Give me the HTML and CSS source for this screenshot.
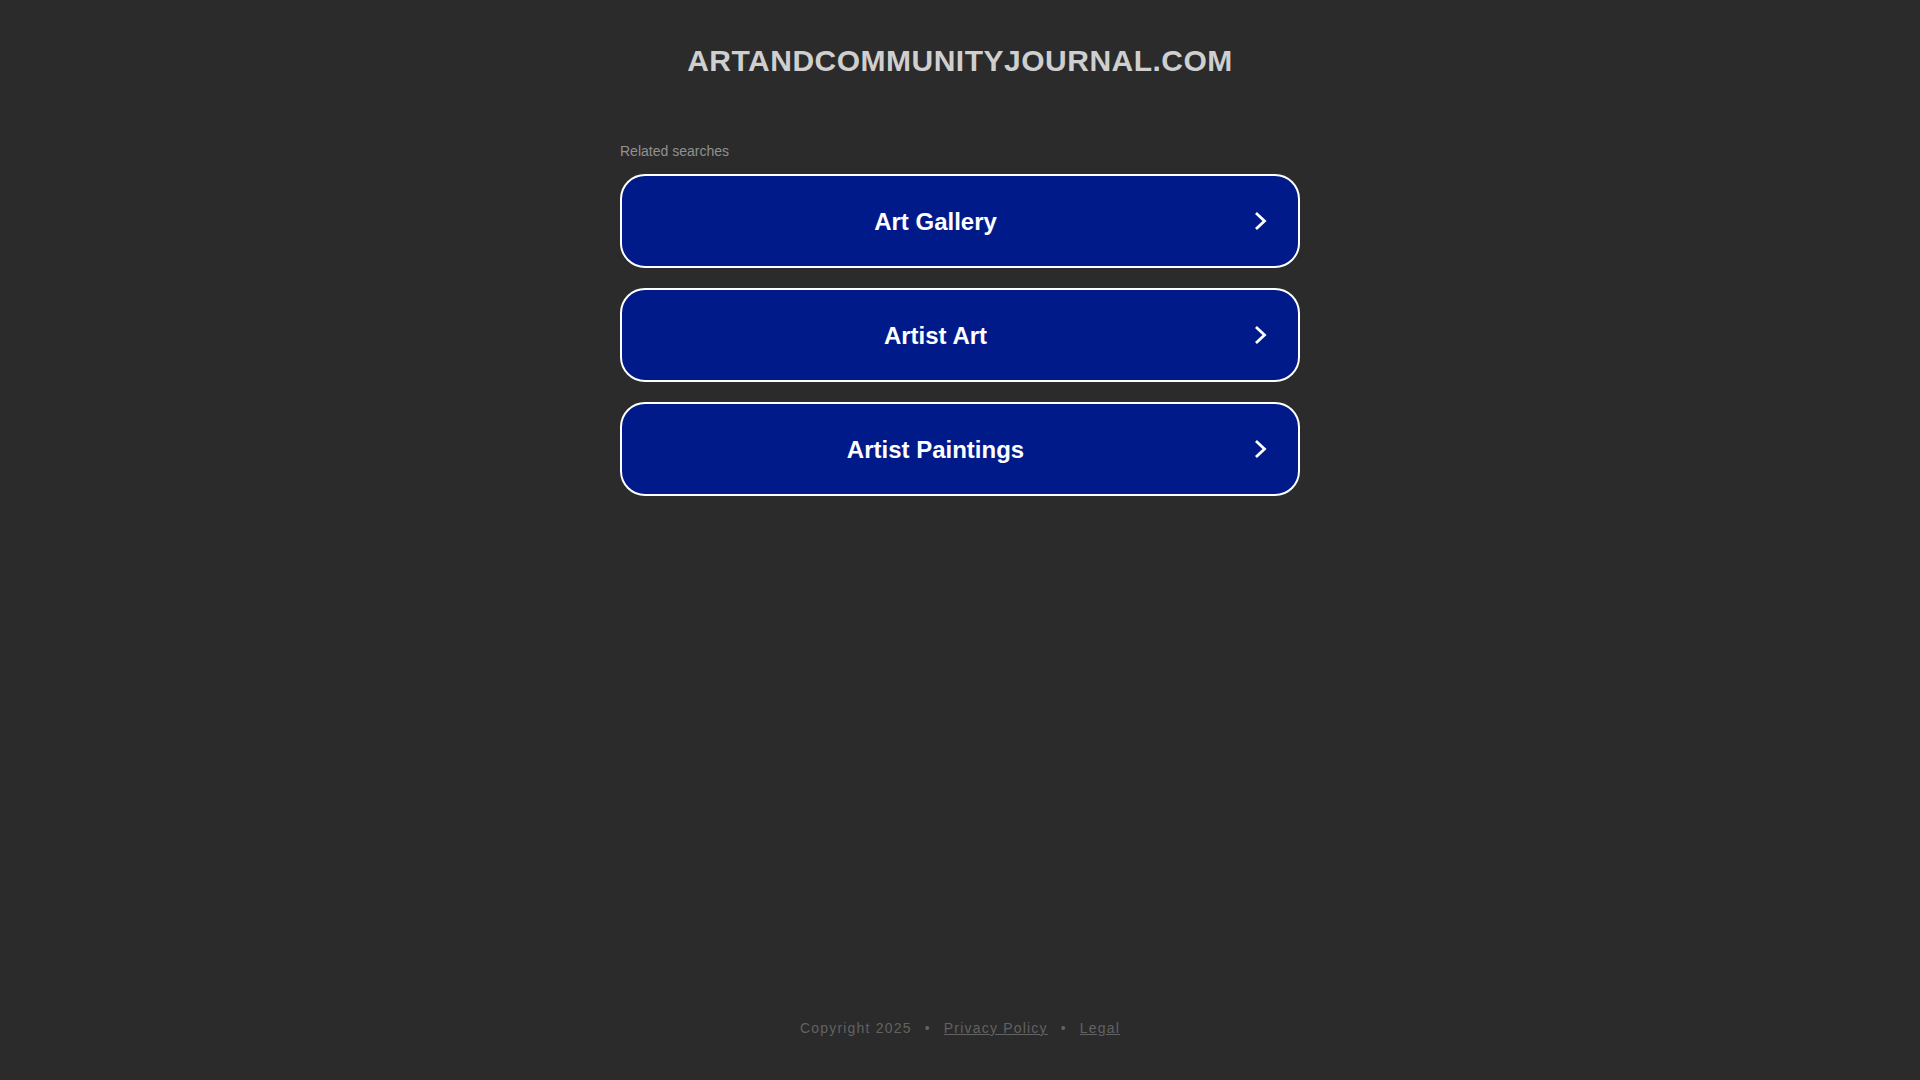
FILE: index.html
```html
<!DOCTYPE html>
<html lang="en">
<head>
<meta charset="utf-8">
<title>artandcommunityjournal.com</title>
<link rel="stylesheet" href="styles.css">
</head>
<body>
<header class="header">
  <h1 class="domain">ARTANDCOMMUNITYJOURNAL.COM</h1>
</header>
<main class="content">
  <div class="label">Related searches</div>
  <div class="list">
    <a class="item" href="#"><span class="item-text">Art Gallery</span><svg class="chev" width="12" height="18" viewBox="0 0 12 18"><polyline points="2,2 9.5,9 2,16" fill="none" stroke="#fff" stroke-width="2.8" stroke-linecap="square"/></svg></a>
    <a class="item" href="#"><span class="item-text">Artist Art</span><svg class="chev" width="12" height="18" viewBox="0 0 12 18"><polyline points="2,2 9.5,9 2,16" fill="none" stroke="#fff" stroke-width="2.8" stroke-linecap="square"/></svg></a>
    <a class="item" href="#"><span class="item-text">Artist Paintings</span><svg class="chev" width="12" height="18" viewBox="0 0 12 18"><polyline points="2,2 9.5,9 2,16" fill="none" stroke="#fff" stroke-width="2.8" stroke-linecap="square"/></svg></a>
  </div>
</main>
<footer class="footer">
  <span>Copyright 2025</span><span class="dot">•</span><a href="#" class="flink">Privacy Policy</a><span class="dot">•</span><a href="#" class="flink">Legal</a>
</footer>
</body>
</html>
```
FILE: styles.css
```css
html, body {
  margin: 0;
  padding: 0;
}
body {
  background: #2b2b2b;
  font-family: "Liberation Sans", Arial, sans-serif;
  min-height: 100vh;
  display: flex;
  flex-direction: column;
}
.header {
  padding-top: 43px;
}
.domain {
  margin: 0;
  text-align: center;
  font-size: 30px;
  line-height: 36px;
  font-weight: bold;
  letter-spacing: 0.5px;
  color: #cfcfcf;
}
.content {
  width: 680px;
  margin: 0 auto;
  padding-top: 64px;
}
.label {
  font-size: 14px;
  line-height: 16px;
  color: #919191;
  margin-bottom: 15px;
}
.list {
  display: flex;
  flex-direction: column;
  gap: 20px;
}
.item {
  box-sizing: border-box;
  height: 94px;
  border: 2px solid #ffffff;
  border-radius: 25px;
  background: #011a8a;
  display: flex;
  align-items: center;
  padding-right: 31px;
  padding-top: 1px;
  text-decoration: none;
  color: #ffffff;
}
.item-text {
  flex: 1;
  text-align: center;
  font-size: 24px;
  font-weight: bold;
  margin-right: 6px;
}
.chev {
  display: block;
  flex: none;
  margin-top: -1px;
}
.footer {
  margin-top: auto;
  padding-bottom: 44px;
  display: flex;
  justify-content: center;
  font-size: 14px;
  line-height: 16px;
  letter-spacing: 1.2px;
  color: #626262;
}
.dot {
  margin: 0 13px;
}
.flink {
  color: #626262;
  text-decoration: underline;
}
```
